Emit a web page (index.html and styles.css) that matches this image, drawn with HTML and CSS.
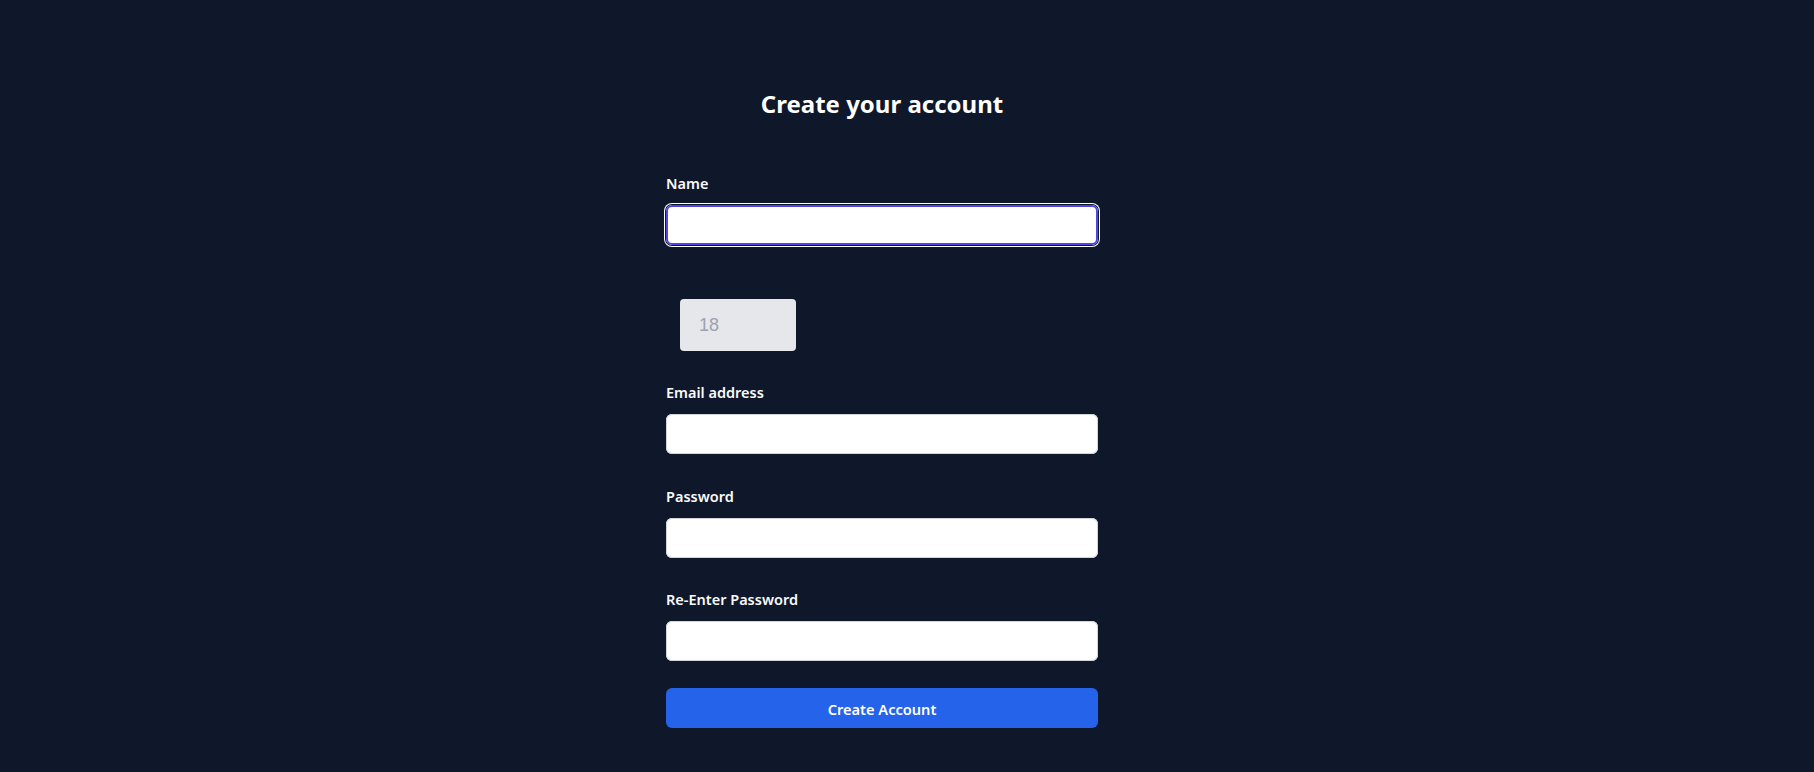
FILE: index.html
```html
<!DOCTYPE html>
<html lang="en">
<head>
<meta charset="utf-8">
<title>Create your account</title>
<link rel="stylesheet" href="styles.css">
</head>
<body>
<main class="page">
  <div class="panel">
    <h2 class="title">Create your account</h2>
    <form class="form">
      <div class="field">
        <label class="label" for="name">Name</label>
        <input class="input input-focus" id="name" type="text">
      </div>
      <div class="age-row">
        <input class="age" type="text" value="18" disabled>
      </div>
      <div class="field">
        <label class="label" for="email">Email address</label>
        <input class="input" id="email" type="email">
      </div>
      <div class="field">
        <label class="label" for="pw">Password</label>
        <input class="input" id="pw" type="password">
      </div>
      <div class="field">
        <label class="label" for="pw2">Re-Enter Password</label>
        <input class="input" id="pw2" type="password">
      </div>
      <button class="submit" type="button">Create Account</button>
    </form>
  </div>
</main>
</body>
</html>
```

FILE: styles.css
```css
html, body {
  margin: 0;
  padding: 0;
  background: #0f172a;
}
body {
  font-family: "Noto Sans", "Open Sans", sans-serif;
  color: #f9fafb;
  height: 772px;
  overflow: hidden;
}
.page {
  display: flex;
  justify-content: center;
  padding-right: 50px;
  padding-top: 88px;
}
.panel {
  width: 432px;
}
.title {
  margin: 0;
  font-size: 24px;
  line-height: 32px;
  font-weight: 700;
  text-align: center;
  color: #ffffff;
}
.form {
  margin-top: 52px;
  display: flex;
  flex-direction: column;
}
.field {
  display: flex;
  flex-direction: column;
}
.field + .field {
  margin-top: 30.5px;
}
.label {
  display: block;
  font-size: 14.5px;
  line-height: 23px;
  font-weight: 600;
  color: #f9fafb;
  margin-bottom: 10px;
}
.input {
  display: block;
  box-sizing: border-box;
  width: 100%;
  height: 40px;
  border: 0;
  border-radius: 6px;
  background: #ffffff;
  box-shadow: inset 0 0 0 1px #d1d5db;
  outline: none;
  padding: 0 12px;
  font-size: 14px;
  font-family: inherit;
}
.input-focus {
  box-shadow: inset 0 0 0 2px #4f46e5, 0 0 0 1px #0f172a, 0 0 0 2px #ffffff;
}
.age-row {
  margin-top: 54px;
  margin-bottom: 30px;
  padding-left: 14px;
}
.age {
  display: block;
  box-sizing: border-box;
  width: 116px;
  height: 52px;
  border: 0;
  border-radius: 4px;
  background: #e5e7eb;
  color: #9ca3af;
  -webkit-text-fill-color: #9ca3af;
  opacity: 1;
  font-family: "Liberation Sans", Arial, sans-serif;
  font-size: 18px;
  padding: 0 0 0 19px;
  outline: none;
}
.submit {
  margin-top: 27px;
  height: 40px;
  width: 100%;
  border: 0;
  border-radius: 6px;
  background: #2563eb;
  color: #ffffff;
  font-family: inherit;
  font-size: 14.6px;
  font-weight: 600;
  line-height: 24px;
  padding: 2px 0 0;
  cursor: pointer;
}
```
